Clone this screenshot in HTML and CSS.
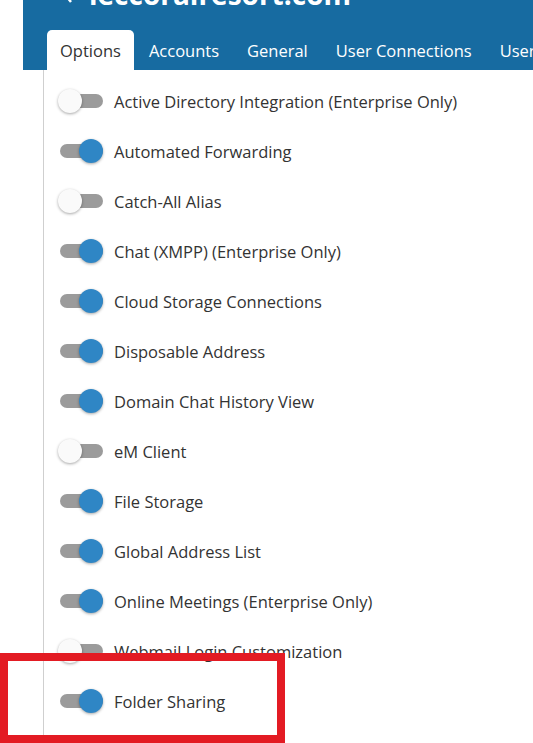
FILE: index.html
```html
<!DOCTYPE html>
<html>
<head>
<meta charset="utf-8">
<link rel="stylesheet" href="styles.css">
</head>
<body>
<div class="page">
  <header class="header">
    <div class="title-row">
      <svg class="back" width="12" height="24" viewBox="0 0 12 24"><path d="M10 2 L2 12 L10 22" fill="none" stroke="#fff" stroke-width="2.5"/></svg>
      <span class="title">leccoralresort.com</span>
    </div>
    <nav class="tabs">
      <span class="tab active">Options</span>
      <span class="tab">Accounts</span>
      <span class="tab">General</span>
      <span class="tab">User Connections</span>
      <span class="tab">User Activity</span>
    </nav>
  </header>
  <main class="content">
    <ul class="list">
      <li class="row"><span class="toggle"></span><span class="label">Active Directory Integration (Enterprise Only)</span></li>
      <li class="row"><span class="toggle on"></span><span class="label">Automated Forwarding</span></li>
      <li class="row"><span class="toggle"></span><span class="label">Catch-All Alias</span></li>
      <li class="row"><span class="toggle on"></span><span class="label">Chat (XMPP) (Enterprise Only)</span></li>
      <li class="row"><span class="toggle on"></span><span class="label">Cloud Storage Connections</span></li>
      <li class="row"><span class="toggle on"></span><span class="label">Disposable Address</span></li>
      <li class="row"><span class="toggle on"></span><span class="label">Domain Chat History View</span></li>
      <li class="row"><span class="toggle"></span><span class="label">eM Client</span></li>
      <li class="row"><span class="toggle on"></span><span class="label">File Storage</span></li>
      <li class="row"><span class="toggle on"></span><span class="label">Global Address List</span></li>
      <li class="row"><span class="toggle on"></span><span class="label">Online Meetings (Enterprise Only)</span></li>
      <li class="row"><span class="toggle"></span><span class="label">Webmail Login Customization</span></li>
      <li class="row"><span class="toggle on"></span><span class="label">Folder Sharing</span></li>
    </ul>
  </main>
  <div class="highlight"></div>
</div>
</body>
</html>
```

FILE: styles.css
```css
html, body {
  margin: 0;
  padding: 0;
  background: #fff;
  overflow: hidden;
}
.page {
  position: relative;
  width: 533px;
  height: 743px;
  overflow: hidden;
  font-family: "Open Sans", "Noto Sans", sans-serif;
}
.header {
  margin-left: 23px;
  height: 70px;
  background: #176ba1;
  display: flex;
  flex-direction: column;
  overflow: hidden;
}
.title-row {
  height: 30px;
  display: flex;
  align-items: flex-end;
  gap: 16px;
  padding-left: 38px;
}
.back {
  margin-top: -20px;
  align-self: flex-start;
}
.title {
  align-self: flex-start;
  margin-top: -26px;
  color: #fff;
  font-weight: 700;
  font-size: 28px;
  line-height: 40px;
  white-space: nowrap;
}
.tabs {
  display: flex;
  height: 40px;
  padding-left: 24px;
  gap: 2px;
  white-space: nowrap;
}
.tab {
  display: flex;
  align-items: center;
  padding: 0 13px;
  color: #fff;
  font-size: 16.5px;
  border-radius: 5px 5px 0 0;
}
.tab.active {
  background: #fff;
  color: #333;
}
.content {
  margin-left: 43px;
  border-left: 1px solid #cfcfcf;
  height: 673px;
  padding-top: 6px;
  box-sizing: border-box;
}
.list {
  list-style: none;
  margin: 0;
  padding: 0 0 0 14px;
}
.row {
  height: 50px;
  display: flex;
  align-items: center;
  gap: 11px;
}
.toggle {
  position: relative;
  width: 45px;
  height: 24px;
  flex: none;
}
.toggle::before {
  content: "";
  position: absolute;
  left: 2px;
  right: 0;
  top: 5px;
  height: 14px;
  border-radius: 7px;
  background: #9b9b9b;
}
.toggle::after {
  content: "";
  position: absolute;
  top: 0;
  left: 0;
  width: 24px;
  height: 24px;
  border-radius: 50%;
  background: #fafafa;
  box-shadow: 0 1px 3px rgba(0,0,0,0.35);
}
.toggle.on::after {
  left: auto;
  right: 0;
  background: #2f86c5;
}
.label {
  font-size: 16.5px;
  color: #333;
  white-space: nowrap;
}
.highlight {
  position: absolute;
  left: 0;
  top: 653px;
  width: 285px;
  height: 90px;
  box-sizing: border-box;
  border: 8px solid #e31b23;
}
```
